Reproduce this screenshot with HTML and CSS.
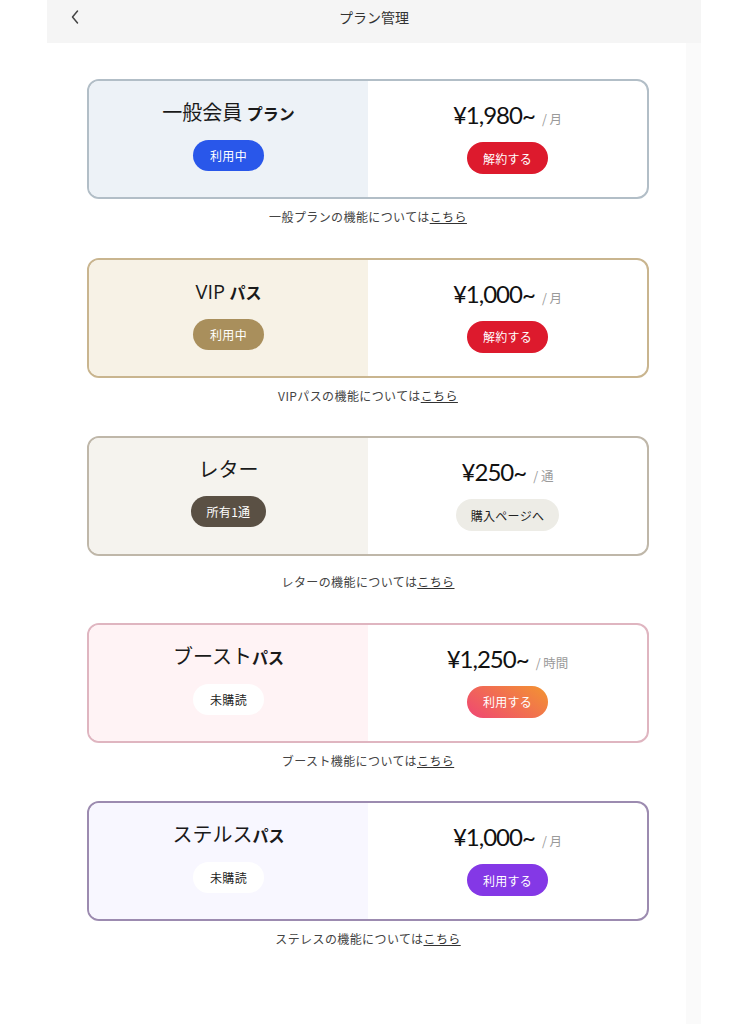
FILE: index.html
```html
<!DOCTYPE html>
<html lang="ja">
<head>
    <meta charset="UTF-8">
    <meta name="viewport" content="width=device-width, initial-scale=1.0">
    <title>プラン管理</title>
    <link rel="stylesheet" href="styles.css">
</head>
<body>
    <div class="page">
        <div class="header">
            <a class="back-button" href="#">
                <svg width="10" height="16" viewBox="0 0 10 16">
                    <path d="M7.5 2 L2.5 8 L7.5 14" fill="none" stroke="#444" stroke-width="1.5" stroke-linecap="round" stroke-linejoin="round"/>
                </svg>
            </a>
            <h1 class="header-title">プラン管理</h1>
        </div>

        <div class="plans">
            <!-- 一般会員 -->
            <div class="plan">
                <div class="plan-card plan-basic">
                    <div class="plan-left">
                        <div class="plan-name">一般会員 <span class="plan-kind">プラン</span></div>
                        <span class="badge">利用中</span>
                    </div>
                    <div class="plan-right">
                        <div class="plan-price">¥1,980~<span class="plan-unit">/ 月</span></div>
                        <button class="plan-button btn-cancel">解約する</button>
                    </div>
                </div>
                <p class="plan-link">一般プランの機能については<a href="#">こちら</a></p>
            </div>

            <!-- VIP -->
            <div class="plan">
                <div class="plan-card plan-vip">
                    <div class="plan-left">
                        <div class="plan-name"><span class="latin">VIP</span> <span class="plan-kind">パス</span></div>
                        <span class="badge">利用中</span>
                    </div>
                    <div class="plan-right">
                        <div class="plan-price">¥1,000~<span class="plan-unit">/ 月</span></div>
                        <button class="plan-button btn-cancel">解約する</button>
                    </div>
                </div>
                <p class="plan-link">VIPパスの機能については<a href="#">こちら</a></p>
            </div>

            <!-- レター -->
            <div class="plan">
                <div class="plan-card plan-letter">
                    <div class="plan-left">
                        <div class="plan-name">レター</div>
                        <span class="badge">所有1通</span>
                    </div>
                    <div class="plan-right">
                        <div class="plan-price">¥250~<span class="plan-unit">/ 通</span></div>
                        <button class="plan-button btn-buy">購入ページへ</button>
                    </div>
                </div>
                <p class="plan-link plan-link-low">レターの機能については<a href="#">こちら</a></p>
            </div>

            <!-- ブースト -->
            <div class="plan">
                <div class="plan-card plan-boost">
                    <div class="plan-left">
                        <div class="plan-name">ブースト<span class="plan-kind">パス</span></div>
                        <span class="badge badge-none">未購読</span>
                    </div>
                    <div class="plan-right">
                        <div class="plan-price">¥1,250~<span class="plan-unit">/ 時間</span></div>
                        <button class="plan-button btn-boost">利用する</button>
                    </div>
                </div>
                <p class="plan-link">ブースト機能については<a href="#">こちら</a></p>
            </div>

            <!-- ステルス -->
            <div class="plan">
                <div class="plan-card plan-stealth">
                    <div class="plan-left">
                        <div class="plan-name">ステルス<span class="plan-kind">パス</span></div>
                        <span class="badge badge-none">未購読</span>
                    </div>
                    <div class="plan-right">
                        <div class="plan-price">¥1,000~<span class="plan-unit">/ 月</span></div>
                        <button class="plan-button btn-stealth">利用する</button>
                    </div>
                </div>
                <p class="plan-link">ステレスの機能については<a href="#">こちら</a></p>
            </div>
        </div>
    </div>
</body>
</html>
```

FILE: styles.css
```css
body {
    margin: 0;
    background-color: #fff;
    font-family: "Noto Sans CJK JP", "Noto Sans", sans-serif;
    color: #222;
}

.page {
    width: 654px;
    min-height: 1024px;
    margin-left: 47px;
    background-color: #fff;
    box-shadow: inset -15px 0 0 #fafafa;
}

.header {
    position: relative;
    height: 43px;
    box-sizing: border-box;
    padding-top: 7px;
    background-color: #f5f5f5;
    text-align: center;
}

.back-button {
    position: absolute;
    left: 23px;
    top: 9px;
    display: block;
    line-height: 0;
}

.header-title {
    margin: 0;
    font-size: 14px;
    line-height: 20px;
    font-weight: 400;
    color: #333;
}

.plans {
    padding: 36px 52px 40px 40px;
}

.plan {
    margin-bottom: 31.5px;
}

.plan-card {
    display: grid;
    grid-template-columns: 1fr 1fr;
    height: 120px;
    box-sizing: border-box;
    border: 2px solid #b1bdc6;
    border-radius: 12px;
    overflow: hidden;
    background-color: #fff;
}

.plan-left,
.plan-right {
    display: flex;
    flex-direction: column;
    align-items: center;
}

.plan-left {
    padding-top: 17px;
    gap: 13px;
}

.plan-right {
    padding-top: 18px;
    gap: 7px;
}

.plan-name {
    font-size: 20px;
    line-height: 28px;
    color: #1a1a1a;
}

.plan-name .latin {
    font-family: "Open Sans", sans-serif;
}

.plan-kind {
    font-size: 16px;
    font-weight: 700;
}

.badge {
    display: inline-block;
    height: 31px;
    line-height: 31px;
    padding: 0 17px;
    border-radius: 16px;
    font-size: 12px;
    letter-spacing: 0.3px;
    color: #fff;
}

.badge-none {
    background-color: #fff !important;
    color: #222 !important;
}

.plan-price {
    font-family: "Lato", sans-serif;
    font-size: 24px;
    line-height: 32px;
    letter-spacing: -1px;
    color: #111;
}

.plan-unit {
    font-family: "Noto Sans CJK JP", sans-serif;
    font-size: 12.5px;
    letter-spacing: 0;
    color: #9a9a9a;
    margin-left: 7px;
}

.plan-button {
    height: 32px;
    padding: 0 16px;
    border: none;
    border-radius: 16px;
    font-family: "Noto Sans CJK JP", sans-serif;
    font-size: 12px;
    letter-spacing: 0.3px;
    color: #fff;
    cursor: pointer;
}

.btn-cancel {
    background-color: #dd1a2d;
}

.btn-buy {
    background-color: #edece6;
    color: #222;
    padding: 0 15px;
}

.btn-boost {
    background: linear-gradient(35deg, #ef4674, #f39530);
}

.btn-stealth {
    background-color: #8438e6;
}

.plan-link {
    margin: 9px 0 0;
    font-size: 12px;
    line-height: 18px;
    letter-spacing: 0.4px;
    text-align: center;
    color: #444;
}

.plan-link a {
    color: #333;
    text-decoration: underline;
}

.plan-link-low {
    margin-top: 17px;
}

/* card themes */
.plan-basic { border-color: #b2bec7; }
.plan-basic .plan-left { background-color: #edf2f7; }
.plan-basic .badge { background-color: #2957ea; }

.plan-vip { border-color: #c9b58f; }
.plan-vip .plan-left { background-color: #f7f2e6; }
.plan-vip .badge { background-color: #a98f5c; }

.plan-letter { border-color: #bfb7a9; }
.plan-letter .plan-left { background-color: #f5f3ee; }
.plan-letter .badge { background-color: #5a5044; padding: 0 16px; }

.plan-boost { border-color: #dfb5c0; }
.plan-boost .plan-left { background-color: #fff3f5; }

.plan-stealth { border-color: #9c8bb0; }
.plan-stealth .plan-left { background-color: #f8f7ff; }
```
